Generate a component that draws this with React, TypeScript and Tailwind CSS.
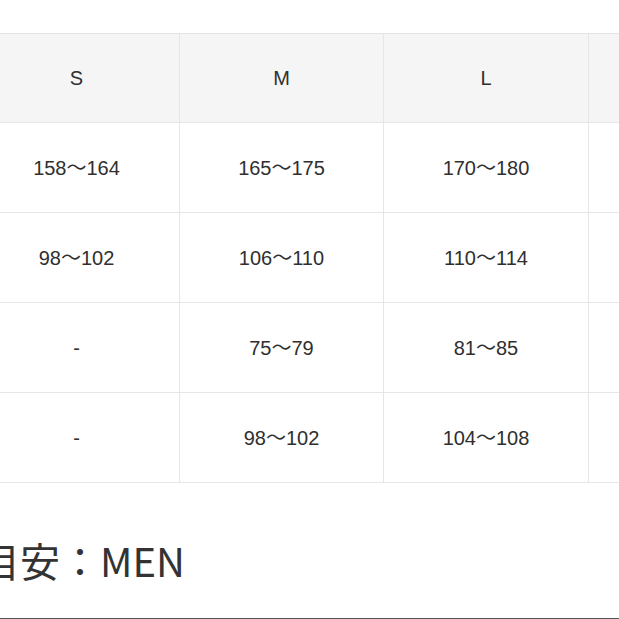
const sizes = ["S", "M", "L", ""];

const rows = [
  ["158～164", "165～175", "170～180", ""],
  ["98～102", "106～110", "110～114", ""],
  ["-", "75～79", "81～85", ""],
  ["-", "98～102", "104～108", ""],
];

const widths = ["w-[206px]", "w-[204px]", "w-[205px]", "w-[205px]"];

function Cell({ text, width, head }: { text: string; width: string; head?: boolean }) {
  return (
    <div
      className={`${width} shrink-0 flex items-center justify-center border-r border-b border-[#e6e6e6] ${
        head ? "h-[89px] bg-[#f5f5f5]" : "h-[90px] bg-white"
      }`}
    >
      {text}
    </div>
  );
}

export default function App() {
  return (
    <div className="w-[619px] h-[619px] overflow-hidden bg-white pt-[33px]">
      <div className="ml-[-26px] w-max border-t border-[#e3e3e3] text-[20px] text-[#2f2f2f] font-['Liberation_Sans','Noto_Sans_CJK_JP',sans-serif]">
        <div className="flex">
          {sizes.map((s, i) => (
            <Cell key={i} text={s} width={widths[i]} head />
          ))}
        </div>
        {rows.map((row, r) => (
          <div key={r} className="flex">
            {row.map((v, i) => (
              <Cell key={i} text={v} width={widths[i]} />
            ))}
          </div>
        ))}
      </div>
      <div className="mt-[57px] ml-[-20px] h-[40px] whitespace-nowrap text-[40px] leading-[40px] text-[#333] font-['Noto_Sans_CJK_JP',sans-serif]">
        目安：MEN
      </div>
      <div className="mt-[38px] h-px bg-[#555]" />
    </div>
  );
}
